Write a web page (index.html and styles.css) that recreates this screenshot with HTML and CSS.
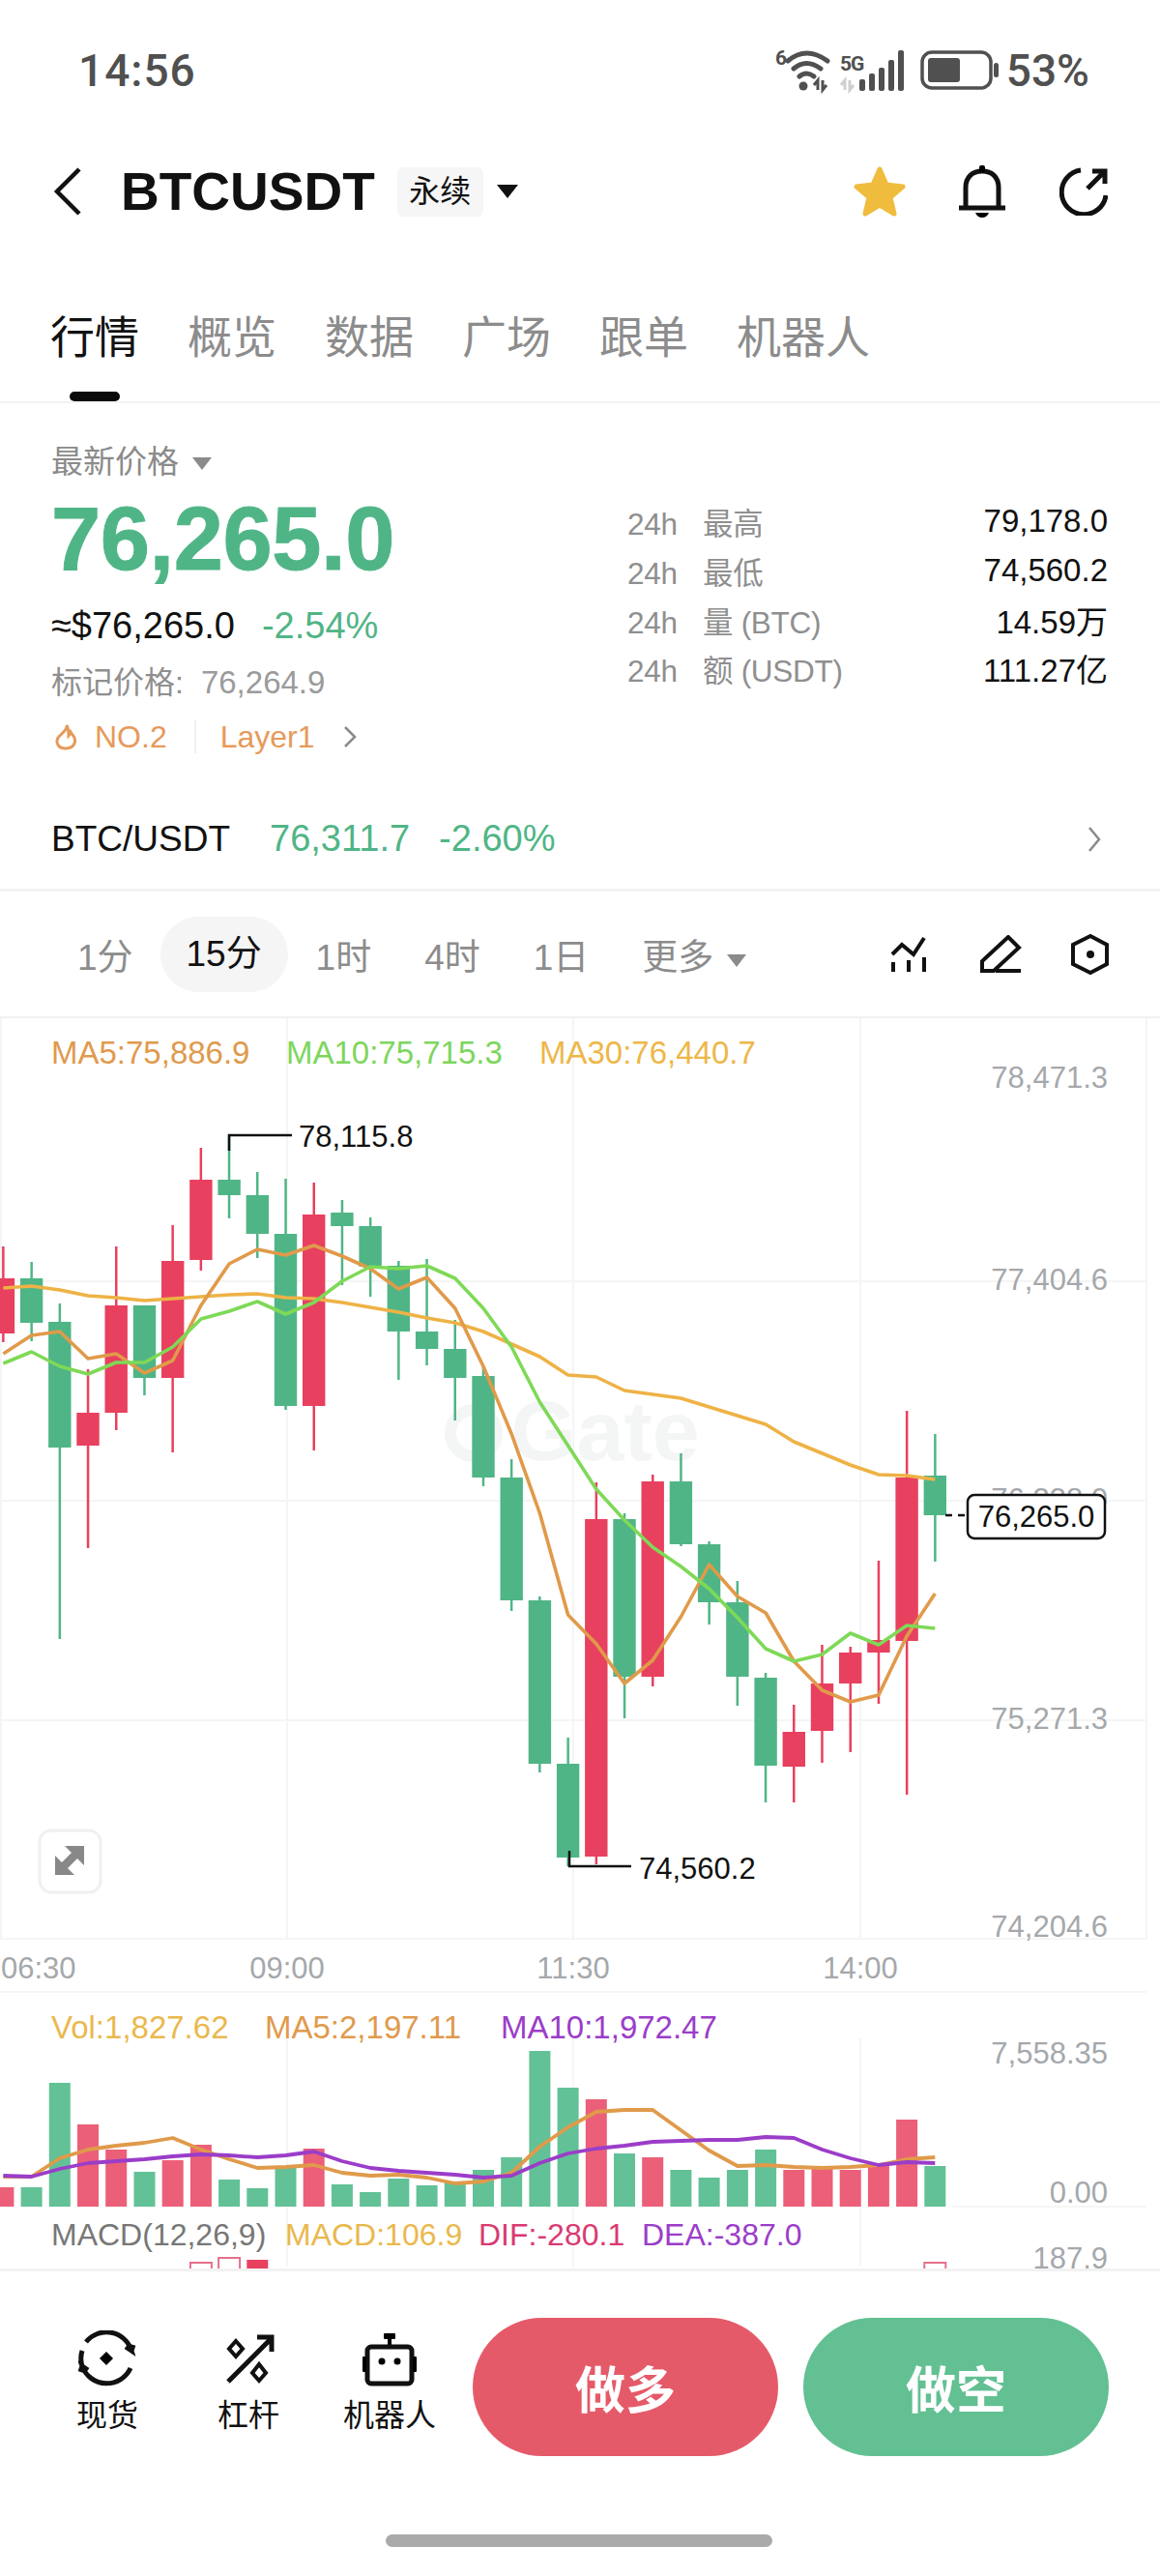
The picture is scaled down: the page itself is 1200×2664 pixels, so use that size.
FILE: index.html
```html
<!DOCTYPE html>
<html lang="zh-CN">
<head>
  <meta charset="UTF-8" />
  <meta name="viewport" content="width=device-width, initial-scale=1" />
  <title>BTCUSDT 永续</title>
  <link rel="stylesheet" href="styles.css">
</head>
<body>
  <div class="status-bar">
    <span class="clock">14:56</span>
    <svg class="status-icons" width="236" height="50" viewBox="800 48 236 50">
      <text class="status-small" x="804" y="67">6</text>
      <path class="wifi" d="M817 63Q836 47 858 63M823 71Q836 60 851 71M829 79Q836 73 844 79" />
      <circle class="status-fill" cx="833" cy="89" r="4.5" />
      <path class="mini-arrows" d="M848 93V83L844 88M853 83V93L857 88" />
      <text class="status-small" x="871" y="73">5G</text>
      <path class="mini-arrows faded" d="M876 93V83L872 88M881 83V93L885 88" />
      <rect class="status-fill" x="891" y="82" width="6" height="12" rx="2" />
      <rect class="status-fill" x="901" y="76" width="6" height="18" rx="2" />
      <rect class="status-fill" x="911" y="70" width="6" height="24" rx="2" />
      <rect class="status-fill" x="921" y="62" width="6" height="32" rx="2" />
      <rect class="status-fill" x="931" y="52" width="6" height="42" rx="2" />
      <rect class="battery" x="956" y="54" width="71" height="37" rx="10" />
      <rect class="status-fill" x="962" y="60" width="33" height="25" rx="3" />
      <rect class="status-fill" x="1030" y="65" width="5" height="15" rx="2.5" />
    </svg>
    <span class="battery-pct">53%</span>
  </div>

  <header class="nav-bar">
    <svg class="back-icon" width="30" height="50" viewBox="0 0 30 50"><path d="M27 2L4 25L27 48" /></svg>
    <h1>BTCUSDT</h1>
    <span class="contract-tag">永续</span>
    <span class="caret caret-black"></span>
    <div class="nav-actions">
      <svg width="56" height="54" viewBox="0 0 56 54"><path class="star" d="M28 4L35 20L52 22L39 33L43 50L28 41L13 50L17 33L4 22L21 20Z" /></svg>
      <svg width="50" height="56" viewBox="0 0 50 56">
        <path class="line-icon" d="M8 44V24C8 13 15 7 25 7C35 7 42 13 42 24V44M1 45H49" />
        <rect x="22" y="1" width="6" height="7" rx="2" />
        <path d="M18 50H32Q30 55 25 55Q20 55 18 50Z" />
      </svg>
      <svg class="share-icon" width="50" height="50" viewBox="1096 173 50 50">
        <path class="line-icon" d="M1118 176A23 23 0 1 0 1144 202M1125 195L1143 177M1130 177H1143V190" />
      </svg>
    </div>
  </header>

  <nav class="tabs">
    <div class="tab tab-active">行情<span class="tab-mark"></span></div>
    <div class="tab">概览</div>
    <div class="tab">数据</div>
    <div class="tab">广场</div>
    <div class="tab">跟单</div>
    <div class="tab">机器人</div>
  </nav>

  <section class="summary">
    <div class="summary-left">
      <div class="price-label">最新价格<span class="caret caret-grey"></span></div>
      <div class="last-price">76,265.0</div>
      <div class="approx"><span>≈$76,265.0</span><span class="green">-2.54%</span></div>
      <div class="mark-price">标记价格:<span class="mark-value">76,264.9</span></div>
      <div class="rank-row">
        <svg width="24" height="28" viewBox="0 0 24 28"><path class="flame" d="M13 2C14 8 7 10 4 15C1 21 5 26 12 26C19 26 23 21 21 15C20 12 18 11 17 9C16 11 16 12 15 13C15 9 15 5 13 2Z" /></svg>
        <span class="rank-no">NO.2</span>
        <span class="rank-sep"></span>
        <span>Layer1</span>
        <svg class="chevron" width="14" height="22" viewBox="0 0 14 22"><path d="M2 1L12 11L2 21" /></svg>
      </div>
    </div>
    <dl class="stats">
      <div class="stat"><dt><span>24h</span>最高</dt><dd>79,178.0</dd></div>
      <div class="stat"><dt><span>24h</span>最低</dt><dd>74,560.2</dd></div>
      <div class="stat"><dt><span>24h</span>量 (BTC)</dt><dd>14.59万</dd></div>
      <div class="stat"><dt><span>24h</span>额 (USDT)</dt><dd>111.27亿</dd></div>
    </dl>
  </section>

  <div class="ticker">
    <span class="pair">BTC/USDT</span>
    <span class="green">76,311.7</span>
    <span class="green">-2.60%</span>
    <svg class="chevron ticker-chevron" width="14" height="26" viewBox="0 0 14 26"><path d="M2 1L12 13L2 25" /></svg>
  </div>

  <div class="periods">
    <span class="period">1分</span>
    <span class="period period-active">15分</span>
    <span class="period">1时</span>
    <span class="period">4时</span>
    <span class="period">1日</span>
    <span class="period period-more">更多<span class="caret caret-grey"></span></span>
    <div class="chart-tools">
      <svg class="tool-lines" width="38" height="38" viewBox="921 968 38 38"><path class="line-icon thin" d="M923 987L933 977L945 987L956 970M924 995V1005M940 993V1005M956 990V1005" /></svg>
      <svg width="44" height="40" viewBox="1014 965 44 40"><path class="line-icon thin" d="M1016 1002V992L1043 967L1054 978L1028 1002ZM1030 1002H1056" /></svg>
      <svg width="40" height="42" viewBox="1108 966 40 42">
        <path class="line-icon thin" d="M1128 968L1145 977V997L1128 1006L1110 997V977Z" />
        <circle cx="1128" cy="987" r="4" />
      </svg>
    </div>
  </div>

  <div class="chart-area">
    <svg id="chart" class="chart" width="1200" height="1293" viewBox="0 1053 1200 1293"></svg>
  </div>

  <footer class="bottom-bar">
    <div class="shortcut">
      <svg width="60" height="60" viewBox="82 2410 60 60">
        <path class="line-icon" d="M86 2447A27 27 0 0 1 86 2431M90 2422A27 27 0 0 1 137 2431L131 2427M137 2431L139 2425M136 2449A27 27 0 0 1 86 2447L92 2451M86 2447L84 2453" />
        <path d="M111 2432L118 2439L111 2446L104 2439Z" />
      </svg>
      <span>现货</span>
    </div>
    <div class="shortcut">
      <svg width="60" height="60" viewBox="226 2412 60 60">
        <path class="line-icon" d="M280 2420L235 2465M265 2419H280V2434" />
        <path class="line-icon thin" d="M243 2423L250 2431L243 2439L236 2431ZM267 2447L274 2456L267 2464L260 2456Z" />
      </svg>
      <span>杠杆</span>
    </div>
    <div class="shortcut">
      <svg width="60" height="60" viewBox="373 2410 60 60">
        <rect x="397" y="2413" width="12" height="6" rx="1" />
        <rect x="401" y="2419" width="4" height="8" />
        <rect class="line-icon" x="380" y="2427" width="46" height="38" rx="4" />
        <rect x="375" y="2437" width="4" height="16" rx="1" />
        <rect x="427" y="2437" width="4" height="16" rx="1" />
        <circle cx="395" cy="2442" r="3.5" />
        <circle cx="411" cy="2442" r="3.5" />
      </svg>
      <span>机器人</span>
    </div>
    <button class="trade-btn trade-long">做多</button>
    <button class="trade-btn trade-short">做空</button>
  </footer>
  <div class="home-bar"></div>

  <script src="chart.js"></script>
</body>
</html>
```

FILE: styles.css
```css
* { box-sizing: border-box; margin: 0; padding: 0; }
body {
  width: 1200px;
  height: 2664px;
  overflow: hidden;
  background: #fff;
  color: #111;
  font-family: "Liberation Sans", "Noto Sans CJK SC", sans-serif;
}
svg { display: block; flex: none; }

/* status bar */
.status-bar { height: 146px; display: flex; align-items: center; padding: 0 73px 0 81px; color: #505050; font-family: Roboto, sans-serif; }
.clock { font-size: 46px; letter-spacing: 1px; font-weight: 500; }
.status-icons { margin-left: auto; margin-right: 7px; }
.battery-pct { font-size: 46px; font-weight: 500; }
.status-small { font-size: 21px; font-weight: bold; fill: #505050; letter-spacing: -1px; }
.status-fill { fill: #505050; }
.wifi { fill: none; stroke: #505050; stroke-width: 5; stroke-linecap: round; }
.mini-arrows { fill: none; stroke: #505050; stroke-width: 3; }
.mini-arrows.faded { stroke: #cfcfcf; }
.battery { fill: none; stroke: #505050; stroke-width: 3.5; }

/* header */
.nav-bar { height: 104px; display: flex; align-items: center; padding-left: 55px; }
.back-icon path { fill: none; stroke: #111; stroke-width: 4.5; }
.nav-bar h1 { font-size: 55px; margin-left: 40px; }
.contract-tag {
  margin-left: 23px;
  width: 89px;
  height: 51px;
  background: #f6f6f6;
  border-radius: 6px;
  font-size: 32px;
  line-height: 51px;
  text-align: center;
}
.caret { display: inline-block; border-left: 11px solid transparent; border-right: 11px solid transparent; }
.caret-black { border-top: 14px solid #111; margin-left: 14px; }
.caret-grey { border-top: 13px solid #8b8b8b; margin-left: 14px; vertical-align: 3px; border-left-width: 10px; border-right-width: 10px; }
.nav-actions { margin-left: auto; display: flex; align-items: center; gap: 53px; padding-right: 54px; }
.share-icon { margin-left: 2px; }
.star { fill: #f0bc3e; stroke: #f0bc3e; stroke-width: 5; stroke-linejoin: round; }
.line-icon { fill: none; stroke: #111; stroke-width: 5; }
.line-icon.thin { stroke-width: 4; }

/* tabs */
.tabs {
  height: 167px;
  display: flex;
  align-items: flex-start;
  gap: 50px;
  padding: 76px 0 0 52px;
  border-bottom: 2px solid #f2f2f2;
  font-size: 46px;
  line-height: 46px;
  color: #8c8c8c;
}
.tab-active { color: #111; display: flex; flex-direction: column; align-items: center; }
.tab-mark { width: 52px; height: 10px; margin-top: 33px; background: #0a0a0a; border-radius: 5px; }

/* price summary */
.summary { display: flex; padding: 41px 54px 37px 53px; }
.summary-left { flex: 1; }
.price-label { font-size: 33px; line-height: 40px; color: #8b8b8b; }
.last-price {
  font-size: 92px;
  font-weight: bold;
  line-height: 100px;
  margin-top: 9px;
  color: #50b586;
  letter-spacing: -0.4px;
  -webkit-text-stroke: 1px #50b586;
}
.approx { display: flex; gap: 28px; font-size: 38px; line-height: 44px; margin-top: 18px; }
.green { color: #50b586; }
.mark-price { font-size: 32px; line-height: 40px; margin-top: 17px; color: #8f8f8f; }
.mark-value { font-size: 33px; margin-left: 18px; color: #9b9b9b; }
.rank-row { display: flex; align-items: center; font-size: 32px; line-height: 40px; margin-top: 16px; color: #e69a5b; padding-left: 3px; }
.flame { fill: none; stroke: #e69a5b; stroke-width: 3; }
.rank-no { margin-left: 18px; }
.rank-sep { width: 2px; height: 34px; margin: 0 25px 0 28px; background: #f0f0f0; }
.chevron { margin-left: 29px; }
.chevron path { fill: none; stroke: #8a8a8a; stroke-width: 2.5; }
.stats { width: 497px; padding-top: 56px; font-size: 33px; }
.stat { display: flex; justify-content: space-between; align-items: center; height: 50.67px; }
.stat dt { color: #8f8f8f; font-size: 31.5px; letter-spacing: -0.3px; }
.stat dt span { display: inline-block; width: 78px; }
.stat dd { color: #111; }

/* ticker row */
.ticker { height: 103px; padding: 0 61px 3px 53px; display: flex; align-items: center; font-size: 38px; border-bottom: 3px solid #f2f2f2; }
.pair { margin-right: 41px; font-size: 37px; }
.ticker .green + .green { margin-left: 30px; }
.ticker-chevron { margin-left: auto; }

/* periods */
.periods { height: 131px; display: flex; align-items: center; padding: 0 52px 0 80px; border-bottom: 2px solid #f2f2f2; font-size: 37px; color: #8c8c8c; }
.period { margin-right: 55px; }
.period-active {
  width: 132px;
  height: 78px;
  margin: 0 29px 0 -27px;
  background: #f5f5f5;
  border-radius: 39px;
  color: #111;
  line-height: 78px;
  text-align: center;
}
.period-more { margin-right: 0; }
.chart-tools { margin-left: auto; display: flex; align-items: center; gap: 50px; }
.tool-lines { margin-right: 5px; }
.chart-tools circle { fill: #111; }

/* chart */
.chart-area { height: 1293px; }
.chart-text { font-size: 31px; fill: #a5a8ab; }
.legend { font-size: 33px; }
.legend-small { font-size: 32px; }
.dark { fill: #111; }
.grid { stroke: #f5f5f5; stroke-width: 2; }
.watermark { font-size: 88px; font-weight: bold; fill: #f4f5f5; }
.wm-ring { fill: none; stroke: #f4f5f5; stroke-width: 12; }
.up { fill: #50b586; }
.down { fill: #e8405f; }
.bar-up { fill: #62c196; }
.bar-down { fill: #ec5f78; }
.ma-line { fill: none; stroke-linejoin: round; }
.marker { fill: none; stroke: #111; stroke-width: 2.5; }
.price-tag { fill: #fff; stroke: #111; stroke-width: 2.5; }
.expand-box { fill: #fff; stroke: #f0f0f0; stroke-width: 3; }
.expand-arrow { fill: #888; }
.outline-bar { fill: #fff; stroke: #e4718a; stroke-width: 2; }

/* bottom bar */
.bottom-bar { height: 275px; padding: 48px 52px 0 0; display: flex; align-items: flex-start; border-top: 3px solid #f2f2f2; }
.shortcut { width: 86px; display: flex; flex-direction: column; align-items: center; font-size: 32px; white-space: nowrap; padding-top: 13px; }
.shortcut span { margin-top: 8px; line-height: 40px; }
.shortcut:nth-child(1) { margin-left: 68px; }
.shortcut:nth-child(2) { margin-left: 60px; }
.shortcut:nth-child(3) { margin-left: 60px; }
.trade-btn {
  width: 316px;
  height: 143px;
  margin-left: 26px;
  border: 0;
  border-radius: 72px;
  color: #fff;
  font-family: inherit;
  font-size: 52px;
  font-weight: bold;
}
.trade-long { margin-left: 43px; background: #e55a69; }
.trade-short { background: #62c092; }
.home-bar { width: 400px; height: 13px; margin: 0 auto; background: #aaa; border-radius: 7px; position: relative; left: -1px; }
```

FILE: chart.js
```js
// x position of candle i, all y values below are page pixels
const X0 = 3.4, STEP = 29.21, BODY = 23.4;
const xOf = i => X0 + STEP * i;

// [up?, wick top, body top, body bottom, wick bottom]  (up = green)
const candles = [
  [0,1289,1322,1379,1388],[1,1305,1322,1368,1387],[1,1348,1367,1497,1695],[0,1416,1461,1495,1601],
  [0,1289,1350,1461,1479],[1,1350,1350,1425,1443],[0,1267,1304,1425,1502],[0,1187,1220,1303,1314],
  [1,1174,1220,1236,1260],[1,1212,1236,1276,1301],[1,1219,1276,1454,1458],[0,1223,1256,1454,1500],
  [1,1241,1254,1268,1329],[1,1259,1268,1310,1341],[1,1304,1309,1377,1427],[1,1302,1377,1395,1412],
  [1,1365,1395,1425,1469],[1,1414,1423,1528,1537],[1,1509,1528,1655,1666],[1,1651,1655,1824,1833],
  [1,1797,1824,1921,1930],[0,1533,1571,1920,1928],[1,1565,1571,1734,1777],[0,1525,1532,1734,1744],
  [1,1503,1532,1597,1599],[1,1594,1597,1657,1680],[1,1635,1657,1734,1764],[1,1730,1735,1826,1864],
  [0,1763,1791,1827,1864],[0,1701,1741,1790,1823],[0,1703,1709,1741,1812],[0,1614,1696,1709,1762],
  [0,1459,1528,1697,1856],[1,1483,1526,1567,1615]
];
const ma5 = [1400,1381,1377,1405,1400,1420,1407,1350,1307,1292,1298,1288,1299,1312,1333,1321,1353,1413,1483,1565,1670,1700,1741,1717,1672,1618,1651,1668,1718,1748,1760,1753,1692,1648];
const ma10 = [1410,1398,1413,1421,1409,1409,1393,1364,1356,1346,1359,1347,1325,1310,1312,1309,1322,1353,1393,1450,1495,1540,1572,1600,1620,1643,1673,1705,1718,1711,1689,1701,1681,1684];
const ma30 = [1332,1330,1334,1340,1342,1345,1343,1341,1339,1338,1342,1343,1347,1352,1357,1363,1368,1377,1390,1403,1422,1424,1438,1442,1446,1455,1464,1473,1491,1503,1515,1525,1526,1530];

const volTops = [2262,2262,2154,2197,2223,2246,2234,2218,2254,2263,2242,2222,2259,2267,2253,2260,2256,2244,2231,2121,2159,2171,2227,2231,2244,2252,2244,2223,2244,2242,2244,2238,2192,2240];
const volMa5 = [2251,2251,2232,2223,2219,2216,2211,2223,2233,2242,2241,2239,2247,2250,2249,2252,2258,2256,2247,2220,2200,2184,2182,2182,2203,2224,2240,2239,2241,2242,2241,2239,2233,2231];
const volMa10 = [2250,2251,2243,2237,2235,2233,2230,2228,2229,2231,2229,2225,2235,2242,2245,2247,2249,2252,2250,2237,2227,2222,2219,2215,2214,2213,2213,2210,2211,2223,2232,2239,2236,2237];

const text = (x, y, str, cls, fill, anchor) =>
  `<text class="chart-text ${cls || ''}" x="${x}" y="${y}"` +
  (fill ? ` style="fill:${fill}"` : '') +
  (anchor ? ` text-anchor="${anchor}"` : '') + `>${str}</text>`;
const line = (ys, color, width) =>
  `<polyline class="ma-line" stroke="${color}" stroke-width="${width || 3.6}" points="${ys.map((y, i) => xOf(i).toFixed(1) + ',' + y).join(' ')}" />`;

let out = '';

// grid
[1325, 1552, 1779].forEach(y => { out += `<line class="grid" x1="0" x2="1186" y1="${y}" y2="${y}" />`; });
[1, 297, 593, 890, 1186].forEach(x => { out += `<line class="grid" x1="${x}" x2="${x}" y1="1053" y2="2005" />`; });
[297, 593, 890].forEach(x => { out += `<line class="grid" x1="${x}" x2="${x}" y1="2108" y2="2344" />`; });
[2005, 2060].forEach(y => { out += `<line class="grid" x1="0" x2="1186" y1="${y}" y2="${y}" />`; });
out += `<line class="grid" x1="985" x2="1186" y1="2282" y2="2282" />`;

// watermark
out += `<circle class="wm-ring" cx="490" cy="1482" r="24" />`;
out += `<text class="watermark" x="528" y="1510">Gate</text>`;

// right axis
out += text(1146, 1125, '78,471.3', '', '', 'end');
out += text(1146, 1334, '77,404.6', '', '', 'end');
out += text(1146, 1561, '76,338.0', '', '', 'end');
out += text(1146, 1788, '75,271.3', '', '', 'end');
out += text(1146, 2003, '74,204.6', '', '', 'end');

// candles
candles.forEach((c, i) => {
  const cls = c[0] ? 'up' : 'down';
  const x = xOf(i);
  out += `<rect class="${cls}" x="${(x - 1.25).toFixed(1)}" y="${c[1]}" width="2.5" height="${c[4] - c[1]}" />`;
  out += `<rect class="${cls}" x="${(x - BODY / 2).toFixed(1)}" y="${c[2]}" width="${BODY}" height="${c[3] - c[2]}" />`;
});
out += line(ma30, '#eeb245');
out += line(ma5, '#e09a4a');
out += line(ma10, '#7ed957');

// legend
out += text(53, 1100, 'MA5:75,886.9', 'legend', '#e09a4d');
out += text(296, 1100, 'MA10:75,715.3', 'legend', '#7cd65c');
out += text(558, 1100, 'MA30:76,440.7', 'legend', '#edb748');

// high, low and last price markers
out += `<path class="marker" d="M237 1190V1174H302M589 1914V1930H653" />`;
out += text(309, 1186, '78,115.8', 'dark');
out += text(661, 1943, '74,560.2', 'dark');
out += `<line class="marker" x1="978" x2="999" y1="1567" y2="1567" stroke-dasharray="7 6" />`;
out += `<rect class="price-tag" x="1001" y="1546" width="142" height="45" rx="7" />`;
out += text(1072, 1579, '76,265.0', 'dark', '', 'middle');

// expand button
out += `<rect class="expand-box" x="41" y="1893" width="63" height="64" rx="12" />`;
out += `<path class="expand-arrow" d="M87 1909V1929L80 1922L72 1930L66 1924L74 1916L67 1909ZM57 1939V1919L64 1926L72 1918L78 1924L70 1932L77 1939Z" />`;

// time axis
out += text(1, 2046, '06:30');
out += text(297, 2046, '09:00', '', '', 'middle');
out += text(593, 2046, '11:30', '', '', 'middle');
out += text(890, 2046, '14:00', '', '', 'middle');

// volume
out += text(53, 2108, 'Vol:1,827.62', 'legend', '#eab84d');
out += text(274, 2108, 'MA5:2,197.11', 'legend', '#e09a4d');
out += text(518, 2108, 'MA10:1,972.47', 'legend', '#9b3dc9');
out += text(1146, 2134, '7,558.35', '', '', 'end');
out += text(1146, 2278, '0.00', '', '', 'end');
volTops.forEach((top, i) => {
  const cls = candles[i][0] ? 'bar-up' : 'bar-down';
  out += `<rect class="${cls}" x="${(xOf(i) - 11).toFixed(1)}" y="${top}" width="22" height="${2282 - top}" />`;
});
out += line(volMa5, '#e09a4a', 3.8);
out += line(volMa10, '#9b3dc9', 3.8);

// MACD, only its top edge is on screen
out += text(53, 2322, 'MACD(12,26,9)', 'legend-small', '#777');
out += text(295, 2322, 'MACD:106.9', 'legend-small', '#eab84d');
out += text(495, 2322, 'DIF:-280.1', 'legend-small', '#d93a72');
out += text(664, 2322, 'DEA:-387.0', 'legend-small', '#9b3dc9');
out += text(1146, 2346, '187.9', '', '', 'end');
[[7, 2340], [8, 2335], [33, 2340]].forEach(b => {
  out += `<rect class="outline-bar" x="${(xOf(b[0]) - 11).toFixed(1)}" y="${b[1]}" width="22" height="20" />`;
});
out += `<rect class="down" x="${(xOf(9) - 11).toFixed(1)}" y="2337" width="22" height="20" />`;

document.getElementById('chart').innerHTML = out;
```
